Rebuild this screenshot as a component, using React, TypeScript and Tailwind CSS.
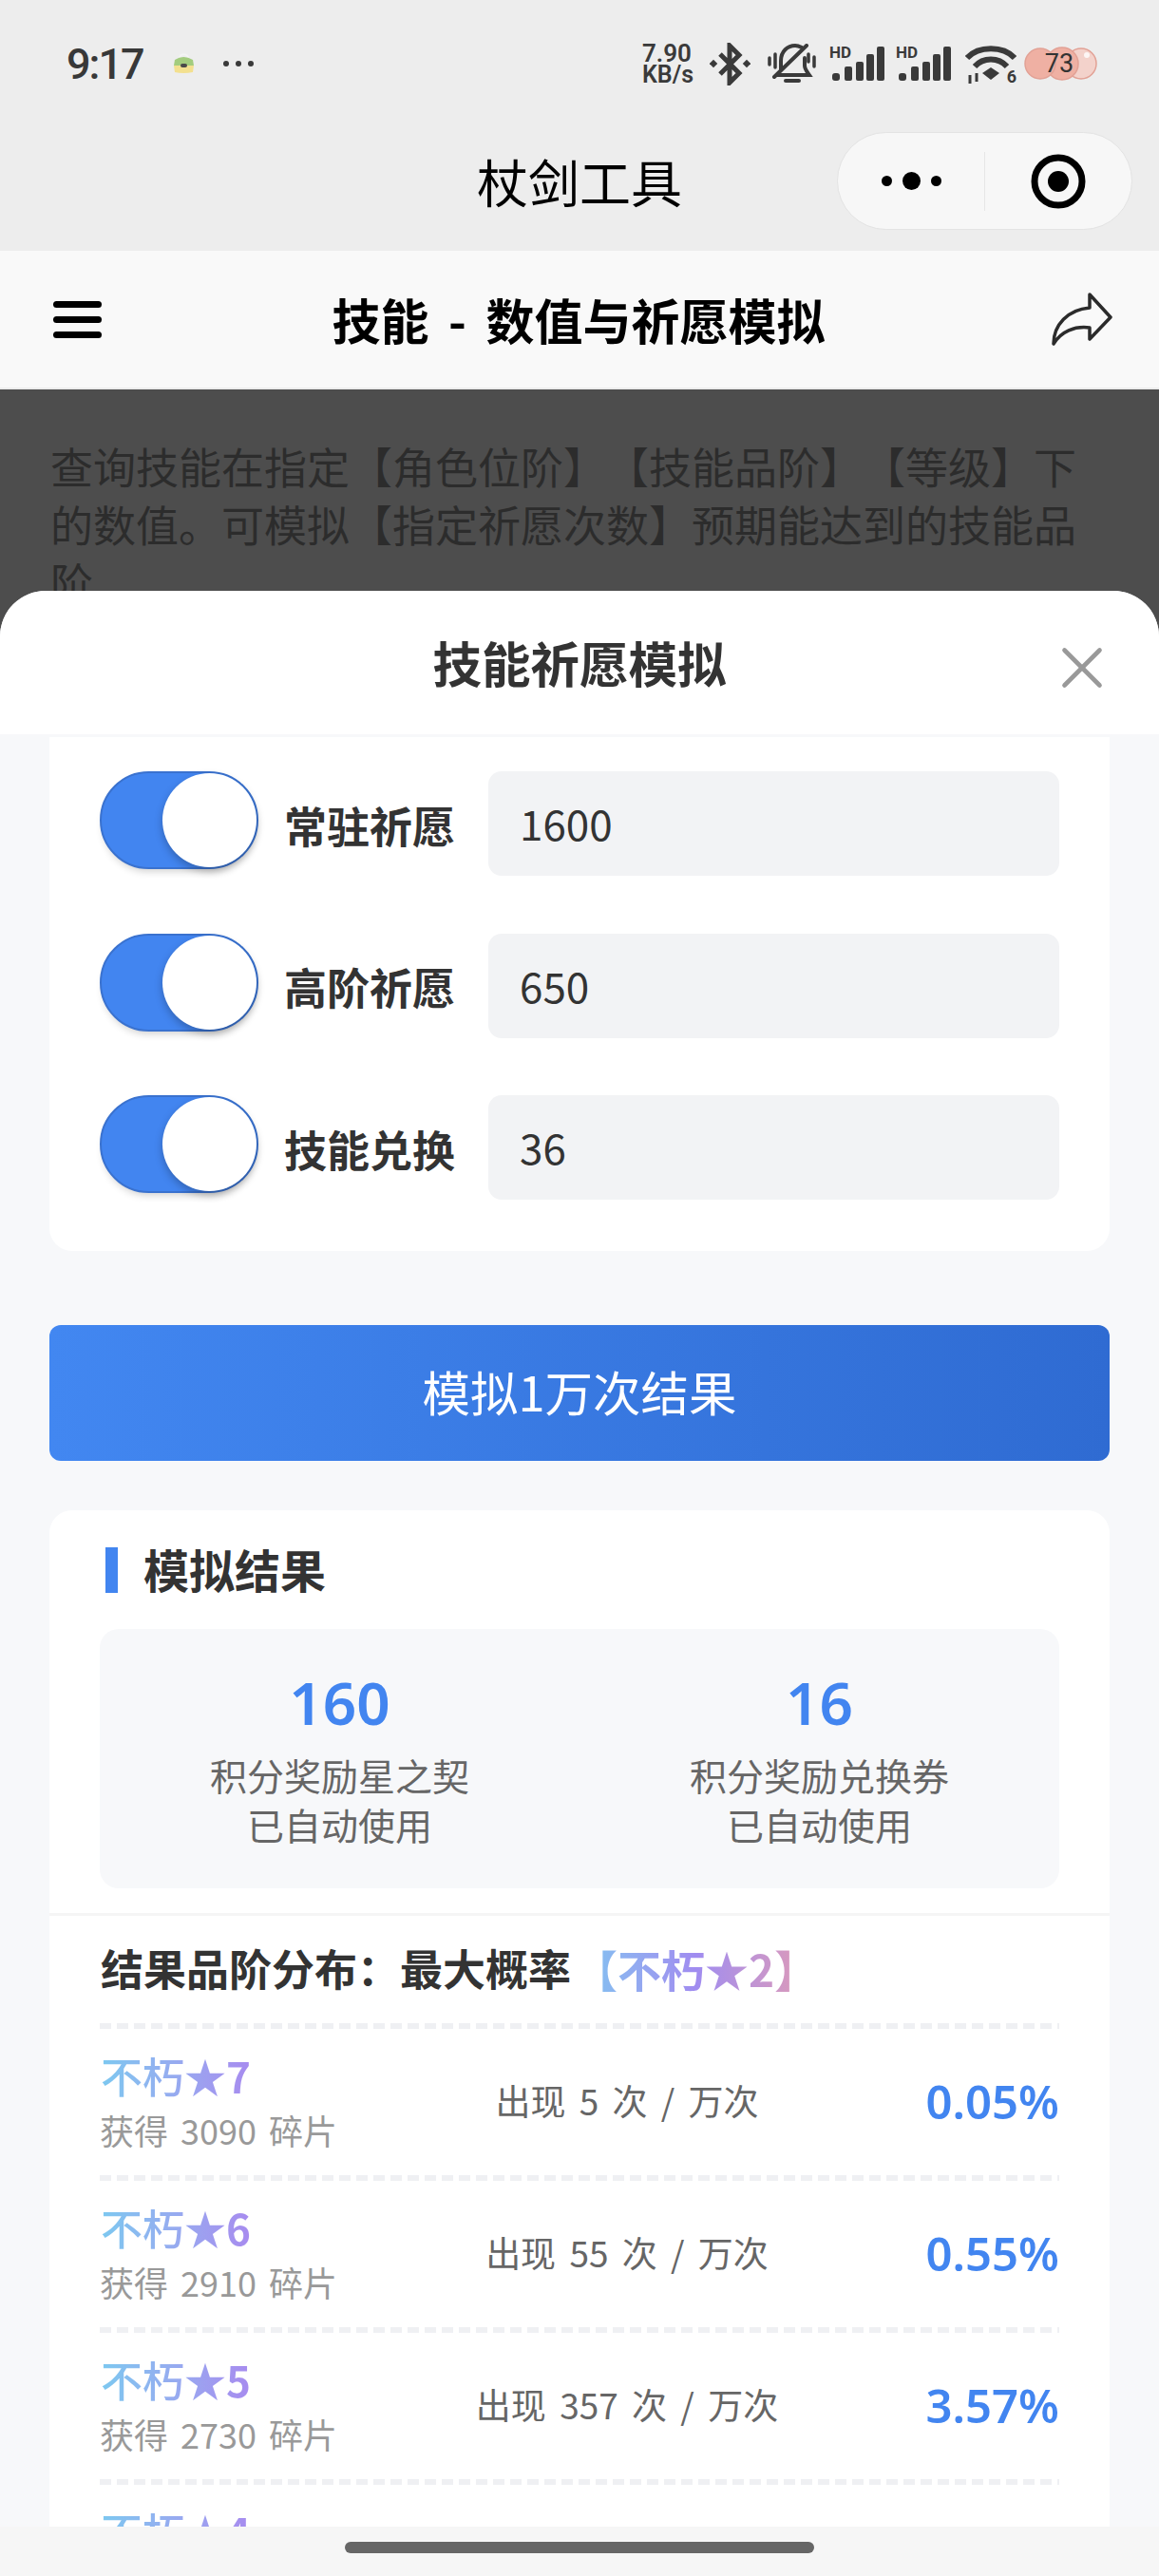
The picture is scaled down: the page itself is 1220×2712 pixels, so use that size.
import { X } from "lucide-react"

const cjk = "font-['Noto_Sans_CJK_SC',sans-serif]"

function Signal() {
  return (
    <div className="relative w-[58px] h-[38px]">
      <span className="absolute left-0 top-0 font-['Roboto',sans-serif] text-[17px] leading-[15px] font-bold text-[#3a3a3a]">HD</span>
      <svg width="58" height="38" viewBox="0 0 58 38" fill="#3a3a3a">
        <rect x="3" y="29" width="8" height="8" rx="3" />
        <rect x="16" y="22" width="8" height="15" rx="2" />
        <rect x="28" y="17" width="8" height="20" rx="2" />
        <rect x="39" y="9" width="8" height="28" rx="2" />
        <rect x="50" y="1" width="8" height="36" rx="2" />
      </svg>
    </div>
  )
}

function StatusBar() {
  return (
    <div className="h-[134px] flex items-center justify-between pl-[70px] pr-[65px]">
      <div className="flex items-center">
        <span className="font-['Roboto',sans-serif] text-[45px] font-medium tracking-[-2px] text-[#383838] leading-none w-[112px]">9:17</span>
        <svg width="23" height="22" viewBox="0 0 23 22">
          <path d="M7 5 C7 0 16 0 16 5" fill="none" stroke="#f4f4f4" strokeWidth="2" />
          <path d="M2 7 Q11 1 21 7 L22 13 H1 Z" fill="#a3cc7e" />
          <path d="M1 13 H22 L21 20 Q11 22 2 20 Z" fill="#f3e08f" />
          <rect x="8" y="11" width="7" height="4" rx="2" fill="#4a4a4a" />
        </svg>
        <div className="flex gap-[7px] ml-[30px]">
          <span className="size-[6px] rounded-full bg-[#3a3a3a]" />
          <span className="size-[6px] rounded-full bg-[#3a3a3a]" />
          <span className="size-[6px] rounded-full bg-[#3a3a3a]" />
        </div>
      </div>
      <div className="flex items-center text-[#3a3a3a]">
        <div className="flex flex-col w-[60px] font-['Roboto',sans-serif] font-semibold">
          <span className="text-[26px] leading-[23px]">7.90</span>
          <span className="text-[25px] leading-[21px]">KB/s</span>
        </div>
        <svg className="ml-[11px]" width="43" height="45" viewBox="0 0 43 45" fill="none" stroke="#3a3a3a" strokeWidth="5">
          <path d="M11 12 L31 32 L21 42 V3 L31 13 L11 33" />
          <rect x="1" y="19" width="6" height="6" fill="#3a3a3a" stroke="none" transform="rotate(45 4 22)" />
          <rect x="36" y="19" width="6" height="6" fill="#3a3a3a" stroke="none" transform="rotate(45 39 22)" />
        </svg>
        <svg className="ml-[18px]" width="51" height="43" viewBox="0 0 51 43" fill="none" stroke="#3a3a3a" strokeWidth="4" strokeLinecap="round">
          <path d="M14 27 V18 C14 8 21 2 29 2 C32 2 34 3 36 4" />
          <path d="M39 15 V23 C39 27 42 30 44 33 H10" />
          <path d="M41 2 L7 35" />
          <path d="M2 15 V22 M8 11 V25 M43 11 V19 M49 14 V24" strokeWidth="3.5" />
          <path d="M19 39 H33" strokeWidth="4" />
        </svg>
        <div className="ml-[14px]"><Signal /></div>
        <div className="ml-[12px]"><Signal /></div>
        <div className="relative ml-[15px] w-[54px] h-[41px]">
          <svg width="54" height="41" viewBox="0 0 54 41" fill="none" stroke="#3a3a3a" strokeWidth="6">
            <path d="M2 14 C14 1 40 1 52 14" />
            <path d="M10 23 C19 13 35 13 44 23" />
            <path d="M27 24 L36 30 L27 37 L18 30 Z" fill="#3a3a3a" stroke="none" />
            <path d="M5 32 V41 M12 30 V39" strokeWidth="3" />
          </svg>
          <span className="absolute right-0 bottom-0 font-['Roboto',sans-serif] text-[18px] leading-[15px] font-bold">6</span>
        </div>
        <div className="relative ml-[8px] w-[77px] h-[36px]">
          <svg width="77" height="36" viewBox="0 0 77 36">
            <circle cx="60" cy="18" r="16" fill="#f3d2cb" stroke="#e2a195" strokeWidth="1.5" />
            <circle cx="40" cy="18" r="17" fill="#efb0a3" stroke="#e2a195" strokeWidth="1.5" />
            <circle cx="17" cy="18" r="16" fill="#efb0a3" stroke="#e2a195" strokeWidth="1.5" />
            <circle cx="66" cy="9" r="3" fill="#fff" opacity="0.8" />
          </svg>
          <span className="absolute inset-0 flex items-center justify-center font-['Roboto',sans-serif] text-[27px] text-[#333] pr-[3px]">73</span>
        </div>
      </div>
    </div>
  )
}

function NavBar() {
  return (
    <div className="h-[130px] grid grid-cols-[1fr_auto_1fr] items-start pt-[5px]">
      <span />
      <span className={`${cjk} text-[54px] leading-[103px] text-black`}>杖剑工具</span>
      <div className="justify-self-end mr-[28px] w-[311px] h-[103px] rounded-full bg-[#f7f7f7] border border-[#e3e3e3] flex items-center">
        <div className="w-[154px] flex items-center justify-center gap-[11px]">
          <span className="size-[11px] rounded-full bg-black" />
          <span className="size-[19px] rounded-full bg-black" />
          <span className="size-[11px] rounded-full bg-black" />
        </div>
        <span className="w-px h-[62px] bg-[#e6e6e6]" />
        <div className="flex-1 flex items-center justify-center">
          <svg width="58" height="58" viewBox="0 0 58 58">
            <circle cx="29" cy="29" r="25" fill="none" stroke="#000" strokeWidth="7" />
            <circle cx="29" cy="29" r="11" fill="#000" />
          </svg>
        </div>
      </div>
    </div>
  )
}

function PageHeader() {
  return (
    <div className="h-[146px] bg-[#f9f9f9] border-b-2 border-[#ececec] grid grid-cols-[1fr_auto_1fr] items-center">
      <div className="ml-[56px] w-[51px] flex flex-col gap-[9px]">
        <span className="h-[7px] rounded-full bg-black" />
        <span className="h-[7px] rounded-full bg-black" />
        <span className="h-[7px] rounded-full bg-black" />
      </div>
      <h1 className={`${cjk} text-[51px] font-bold text-black [word-spacing:9px] pr-[2px]`}>技能 - 数值与祈愿模拟</h1>
      <svg className="justify-self-end mr-[48px]" width="66" height="56" viewBox="0 0 66 56" fill="none" stroke="#2b2b2b" strokeWidth="3.5" strokeLinejoin="round">
        <path d="M41 2 L63 26 L41 49 V37 C25 35 11 41 3 54 C3 34 18 18 41 16 Z" />
      </svg>
    </div>
  )
}

function SwitchRow({ label, value }: { label: string; value: string }) {
  return (
    <div className="flex items-center">
      <div className="self-start w-[167px] h-[103px] rounded-full bg-[#4285f0] border-2 border-[#3a72cf] flex justify-end shadow-[0_6px_8px_-4px_rgba(0,0,0,0.2)]">
        <span className="size-[99px] rounded-full bg-white shadow-[0_4px_8px_rgba(0,0,0,0.25)]" />
      </div>
      <span className={`${cjk} ml-[27px] w-[215px] text-[45px] font-bold text-[#333] pt-[3px]`}>{label}</span>
      <div className={`${cjk} flex-1 h-[110px] rounded-[14px] bg-[#f2f3f5] flex items-center pl-[33px] pb-[2px] text-[44px] text-[#333]`}>{value}</div>
    </div>
  )
}

const rows = [
  { star: "7", shards: "3090", times: "5", pct: "0.05%" },
  { star: "6", shards: "2910", times: "55", pct: "0.55%" },
  { star: "5", shards: "2730", times: "357", pct: "3.57%" },
  { star: "4", shards: "2550", times: "1200", pct: "12.00%" },
]

function Dashes() {
  return <div className="h-[6px] mx-[53px] bg-[repeating-linear-gradient(90deg,#eff0f3_0_12px,transparent_12px_18px)]" />
}

function Stat({ value, label }: { value: string; label: string }) {
  return (
    <div className="flex flex-col items-center">
      <span className="font-['Noto_Sans',sans-serif] text-[62px] leading-[62px] font-semibold text-[#4285f0]">{value}</span>
      <span className={`${cjk} mt-[19px] text-[39px] leading-[52px] text-[#666] text-center`}>
        {label}
        <br />
        已自动使用
      </span>
    </div>
  )
}

function ResultCard() {
  return (
    <div className="mt-[52px] bg-white rounded-t-[24px] pt-[39px]">
      <div className="flex items-center ml-[59px] h-[48px]">
        <span className="w-[13px] h-[48px] bg-[#4285f0]" />
        <span className={`${cjk} ml-[27px] text-[48px] font-bold text-[#333] leading-[46px] pb-[5px]`}>模拟结果</span>
      </div>
      <div className="mt-[38px] mx-[53px] h-[273px] rounded-[20px] bg-[#f7f8fa] pt-[46px] grid grid-cols-[505px_505px]">
        <Stat value="160" label="积分奖励星之契" />
        <Stat value="16" label="积分奖励兑换券" />
      </div>
      <div className="mt-[26px] h-[3px] bg-[#f5f5f5]" />
      <div className={`${cjk} pt-[25px] pl-[54px] h-[88px] flex text-[45px] leading-[60px] font-bold text-[#333]`}>
        结果品阶分布：最大概率
        <span className="ml-[3px] text-[46px] bg-linear-to-r from-[#7cc8f0] via-[#a08cf0] to-[#e59ab0] bg-clip-text text-transparent font-semibold">【不朽★2】</span>
      </div>
      <div className="mt-[25px]">
        {rows.map((r) => (
          <div key={r.star}>
            <Dashes />
            <div className="mx-[53px] h-[154px] grid grid-cols-[350px_410px_250px] items-center">
              <div className={cjk}>
                <div className="text-[44px] leading-[50px] font-medium pl-[1px]">
                  <span className="bg-linear-to-r from-[#7cc8f0] to-[#a78bef] bg-clip-text text-transparent">
                    不朽★<span className="font-bold">{r.star}</span>
                  </span>
                </div>
                <div className="mt-[7px] text-[36px] leading-[50px] text-[#999] [word-spacing:5px]">获得 {r.shards} 碎片</div>
              </div>
              <div className={`${cjk} text-center text-[37px] text-[#666] [word-spacing:6px] pb-[2px]`}>出现 {r.times} 次 / 万次</div>
              <div className="font-['Noto_Sans',sans-serif] text-right text-[49px] font-semibold text-[#4285f0]">{r.pct}</div>
            </div>
          </div>
        ))}
      </div>
    </div>
  )
}

function SimulateSheet() {
  return (
    <div className="absolute inset-x-0 top-[212px] bottom-0 flex flex-col rounded-t-[48px] bg-[#f7f8fa] overflow-hidden">
      <div className="relative h-[151px] shrink-0 bg-white flex items-center justify-center">
        <h2 className={`${cjk} text-[51.5px] font-bold text-[#333] pb-[2px]`}>技能祈愿模拟</h2>
        <X className="absolute right-[44px] top-[44px] size-[74px] text-[#999]" strokeWidth={1.5} />
      </div>
      <div className="flex-1 min-h-0 overflow-hidden pt-[3px] px-[52px]">
        <div className="bg-white rounded-b-[24px] pt-[36px] pb-[54px] px-[53px] flex flex-col gap-[60.5px]">
          <SwitchRow label="常驻祈愿" value="1600" />
          <SwitchRow label="高阶祈愿" value="650" />
          <SwitchRow label="技能兑换" value="36" />
        </div>
        <button className={`${cjk} mt-[78px] w-full h-[143px] pb-[3px] rounded-[12px] bg-linear-to-r from-[#4287f1] to-[#2f6bd2] text-[50.5px] text-white`}>
          模拟1万次结果
        </button>
        <ResultCard />
      </div>
      <div className="h-[52px] shrink-0 bg-[#f6f6f6] flex justify-center pt-[16px]">
        <span className="w-[494px] h-[12px] rounded-full bg-[#666]" />
      </div>
    </div>
  )
}

export default function App() {
  return (
    <div className="h-[2712px] w-[1220px] flex flex-col overflow-hidden bg-[#ededed] [text-spacing-trim:space-all]">
      <StatusBar />
      <NavBar />
      <PageHeader />
      <main className="relative flex-1 bg-[#4d4d4d]">
        <p className={`${cjk} pt-[50px] pl-[53px] w-[1144px] text-[45px] leading-[61px] text-[#2c2c2c]`}>
          查询技能在指定【角色位阶】【技能品阶】【等级】下的数值。可模拟【指定祈愿次数】预期能达到的技能品阶
        </p>
        <SimulateSheet />
      </main>
    </div>
  )
}
